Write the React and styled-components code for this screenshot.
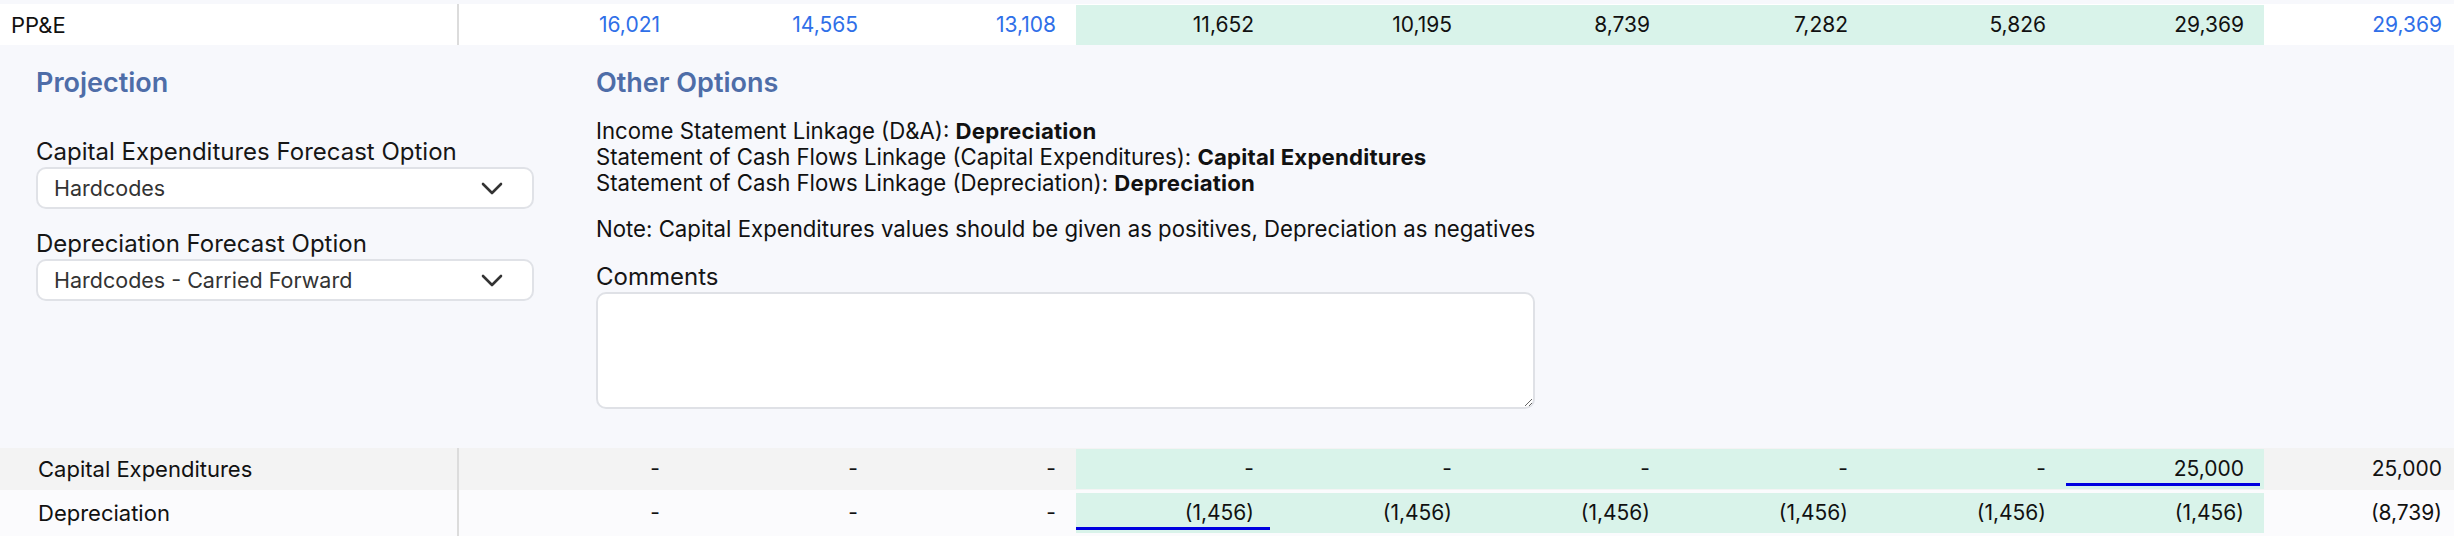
import styled, { createGlobalStyle } from 'styled-components'

const GlobalStyle = createGlobalStyle`
	html, body {
		margin: 0;
		background: #f7f8fc;
		overflow: hidden;
	}
	body {
		font-family: Inter, "Noto Sans", sans-serif;
		color: #111;
	}
`

const Sheet = styled.div`
	padding-top: 4px;
	width: 2462px;
`

const tones = {
	white: '#ffffff',
	gray: '#f3f3f3',
	faint: '#fbfbfd',
}

const Row = styled.div`
	display: grid;
	grid-template-columns: 482px repeat(10, 198px);
	height: ${props => props.$height}px;
	background: ${props => tones[props.$tone]};
	font-size: 21px;
`

const LabelCell = styled.div`
	display: flex;
	align-items: center;
	margin-right: 23px;
	padding-left: ${props => props.$indent}px;
	border-right: 2px solid #dcdcdc;
	font-size: 22px;
	color: #111;
`

const ValueCell = styled.div`
	align-self: center;
	height: 40px;
	line-height: 40px;
	padding-right: 20px;
	text-align: right;
	color: ${props => (props.$link ? '#2f6fe8' : '#111')};
	background: ${props =>
		props.$mark
			? 'linear-gradient(#0000e0, #0000e0) no-repeat left 0 bottom 3px / 98% 3px, #d9f3ea'
			: props.$hl
			? '#d9f3ea'
			: 'transparent'};
`

const Panel = styled.div`
	display: flex;
	gap: 62px;
	padding: 22px 36px 40px;
	height: 403px;
	box-sizing: border-box;
`

const LeftCol = styled.div`
	width: 498px;
`

const RightCol = styled.div`
	width: fit-content;
`

const Heading = styled.h2`
	margin: 0;
	font-size: 27px;
	line-height: 32px;
	font-weight: 600;
	color: #4e6da8;
`

const FieldLabel = styled.div`
	font-size: 24px;
	line-height: 30px;
	color: #161616;
	margin-top: ${props => props.$gap}px;
`

const Select = styled.div`
	display: flex;
	align-items: center;
	justify-content: space-between;
	height: 42px;
	box-sizing: border-box;
	padding: 0 29px 0 16px;
	background: #fff;
	border: 2px solid #e0e2e7;
	border-radius: 10px;
	font-size: 21.5px;
	color: #333;
`

const Linkages = styled.div`
	margin-top: 19px;
	font-size: 22.2px;
	line-height: 26px;

	b {
		letter-spacing: 0.2px;
	}
`

const Note = styled.p`
	margin: 20px 0 0;
	font-size: 22.2px;
	line-height: 26px;
	white-space: nowrap;
`

const Comments = styled.textarea`
	display: block;
	width: 100%;
	height: 117px;
	box-sizing: border-box;
	background: #fff;
	border: 2px solid #dfe1e6;
	border-radius: 10px;
`

function Chevron() {
	return (
		<svg width='22' height='13' viewBox='0 0 22 13' fill='none'>
			<polyline
				points='2,2 11,11 20,2'
				stroke='#333'
				strokeWidth='2.6'
				strokeLinecap='round'
				strokeLinejoin='round'
			/>
		</svg>
	)
}

const rows = [
	{
		label: 'PP&E',
		indent: 11,
		tone: 'white',
		height: 41,
		values: ['16,021', '14,565', '13,108', '11,652', '10,195', '8,739', '7,282', '5,826', '29,369', '29,369'],
		links: [0, 1, 2, 9],
	},
	{
		label: 'Capital Expenditures',
		indent: 38,
		tone: 'gray',
		height: 42,
		values: ['-', '-', '-', '-', '-', '-', '-', '-', '25,000', '25,000'],
		mark: 8,
	},
	{
		label: 'Depreciation',
		indent: 38,
		tone: 'faint',
		height: 46,
		values: ['-', '-', '-', '(1,456)', '(1,456)', '(1,456)', '(1,456)', '(1,456)', '(1,456)', '(8,739)'],
		mark: 3,
	},
]

// columns 3..8 are the forecast periods
const isForecast = i => i >= 3 && i <= 8

function LineItem({ row }) {
	return (
		<Row $tone={row.tone} $height={row.height}>
			<LabelCell $indent={row.indent}>{row.label}</LabelCell>
			{row.values.map((v, i) => (
				<ValueCell
					key={i}
					$hl={isForecast(i)}
					$mark={row.mark === i}
					$link={row.links && row.links.includes(i)}
				>
					{v}
				</ValueCell>
			))}
		</Row>
	)
}

export default function App() {
	return (
		<Sheet>
			<GlobalStyle />
			<LineItem row={rows[0]} />
			<Panel>
				<LeftCol>
					<Heading>Projection</Heading>
					<FieldLabel $gap={38}>Capital Expenditures Forecast Option</FieldLabel>
					<Select>
						Hardcodes
						<Chevron />
					</Select>
					<FieldLabel $gap={20}>Depreciation Forecast Option</FieldLabel>
					<Select>
						Hardcodes - Carried Forward
						<Chevron />
					</Select>
				</LeftCol>
				<RightCol>
					<Heading>Other Options</Heading>
					<Linkages>
						<div>
							Income Statement Linkage (D&amp;A): <b>Depreciation</b>
						</div>
						<div>
							Statement of Cash Flows Linkage (Capital Expenditures): <b>Capital Expenditures</b>
						</div>
						<div>
							Statement of Cash Flows Linkage (Depreciation): <b>Depreciation</b>
						</div>
					</Linkages>
					<Note>
						Note: Capital Expenditures values should be given as positives, Depreciation as negatives
					</Note>
					<FieldLabel $gap={20}>Comments</FieldLabel>
					<Comments />
				</RightCol>
			</Panel>
			<LineItem row={rows[1]} />
			<LineItem row={rows[2]} />
		</Sheet>
	)
}
